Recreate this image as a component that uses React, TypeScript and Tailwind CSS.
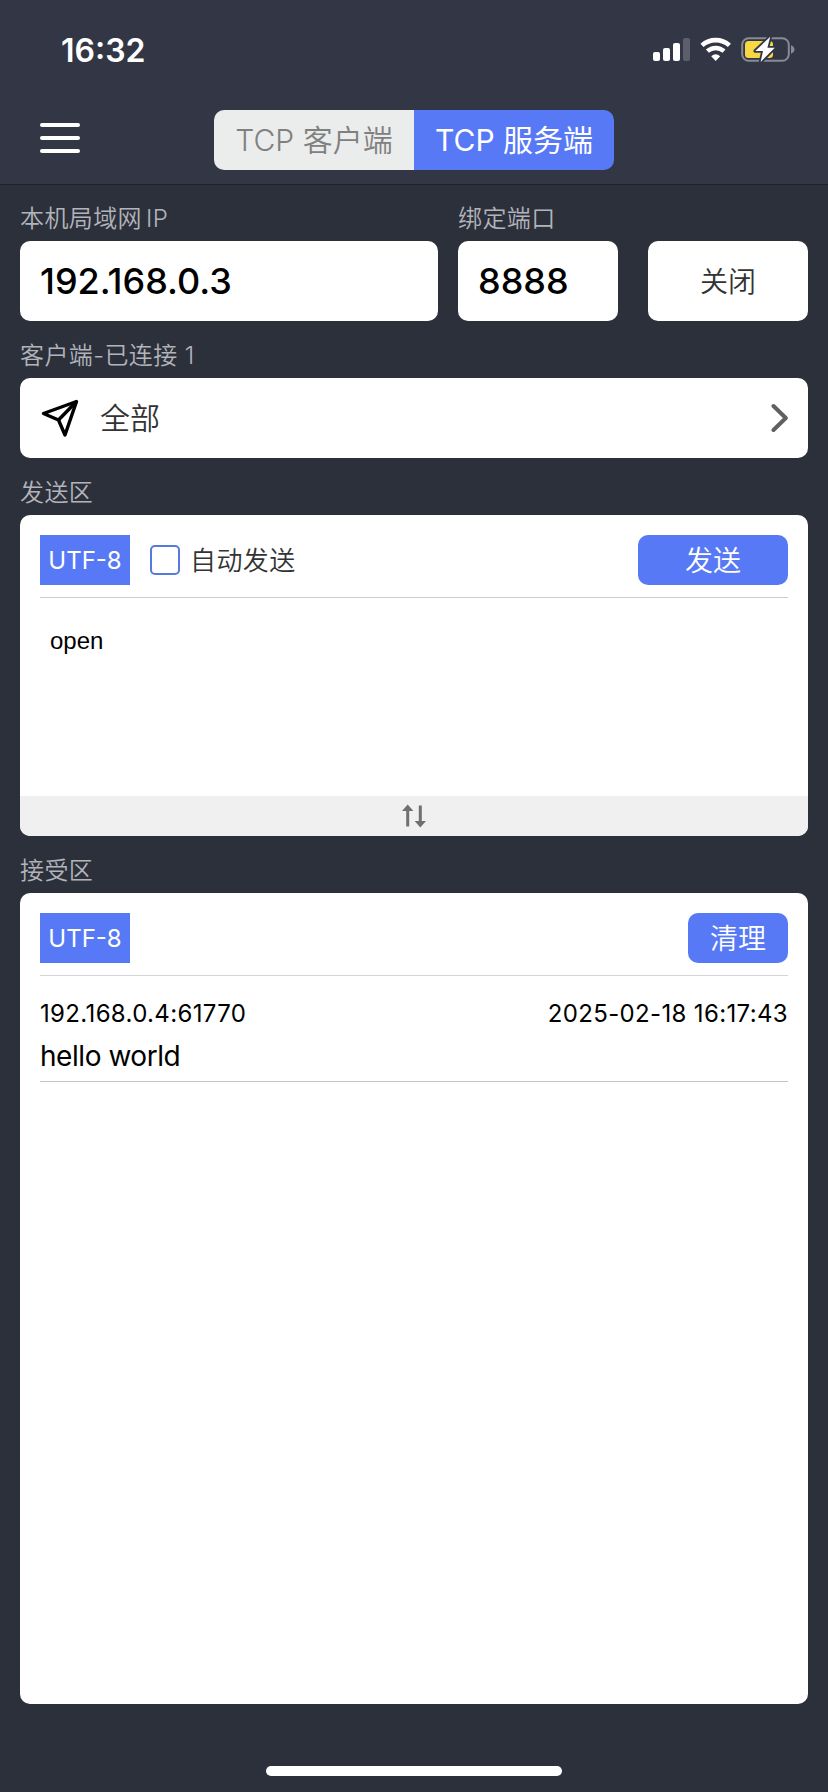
import type { ReactNode } from 'react';

function StatusIcons() {
  return (
    <svg width="142" height="28" viewBox="0 0 142 28" fill="none">
      <rect x="0" y="16" width="7" height="9" rx="2" fill="#fff" />
      <rect x="10" y="12" width="7" height="13" rx="2" fill="#fff" />
      <rect x="20" y="7" width="7" height="18" rx="2" fill="#fff" />
      <rect x="30" y="2" width="7" height="23" rx="2" fill="#5c5e6b" />
      <path d="M49 9.4 A20.5 20.5 0 0 1 76.400 9.4" stroke="#fff" strokeWidth="4.600" />
      <path d="M54.400 15.200 A12.300 12.300 0 0 1 71 15.200" stroke="#fff" strokeWidth="4.400" />
      <path d="M58.200 20.300 Q62.700 16.400 67.200 20.300 L62.700 25 Z" fill="#fff" />
      <rect x="89.200" y="2.200" width="46.600" height="22.600" rx="6.500" stroke="#888a94" strokeWidth="2" />
      <path d="M138 9.300 Q141.500 10.800 141.500 13.500 Q141.500 16.200 138 17.700 Z" fill="#888a94" />
      <rect x="92" y="5" width="28" height="17" rx="3.500" fill="#f8d745" />
      <path
        d="M117.200 0.800 L102.300 14.900 L110 14.900 L107.600 26 L121.800 11.800 L114.400 11.800 Z"
        fill="#fff"
        stroke="#333645"
        strokeWidth="3.600"
        strokeLinejoin="round"
        paintOrder="stroke"
      />
    </svg>
  );
}

function SectionLabel({ children }: { children: ReactNode }) {
  return (
    <div className="h-[57px] pt-[13px] text-2xl leading-[44px] font-[350] tracking-[0.4px] whitespace-nowrap text-[#b2b4ba]">
      {children}
    </div>
  );
}

function EncodingTag() {
  return (
    <button className="h-[50px] w-[90px] bg-[#5779f6] pt-0.5 text-2xl text-white">UTF-8</button>
  );
}

function Header() {
  return (
    <header className="h-[185px] border-b border-[#20222e] bg-[#333645]">
      <div className="flex h-[100px] items-start justify-between pr-[33px] pl-[61px]">
        <span className="pt-[27px] text-[32px] leading-[48px] font-semibold text-white">16:32</span>
        <div className="pt-[36px]">
          <StatusIcons />
        </div>
      </div>
      <div className="flex items-center pt-[10px] pl-10">
        <button aria-label="菜单" className="flex w-10 flex-col gap-[9px] pb-1">
          <span className="h-1 rounded-sm bg-white" />
          <span className="h-1 rounded-sm bg-white" />
          <span className="h-1 rounded-sm bg-white" />
        </button>
        <div className="ml-[134px] flex h-[60px] w-[400px] overflow-hidden rounded-[10px] text-[30px]">
          <button className="flex-1 bg-[#ebecec] font-[350] text-[#808080]">TCP 客户端</button>
          <button className="flex-1 bg-[#5779f6] text-white">TCP 服务端</button>
        </div>
      </div>
    </header>
  );
}

export default function App() {
  return (
    <div
      className="flex h-[1792px] w-[828px] flex-col bg-[#2c303b]"
      style={{ fontFamily: 'Inter, "Noto Sans CJK SC", sans-serif' }}
    >
      <Header />
      <main className="-mt-px flex flex-1 flex-col px-5">
        <div className="flex items-end">
          <div className="w-[418px]">
            <SectionLabel>
              本机局域网<span className="ml-1">IP</span>
            </SectionLabel>
            <div className="flex h-20 items-center rounded-[10px] bg-white px-5 text-[36px] font-medium text-black">
              192.168.0.3
            </div>
          </div>
          <div className="ml-5 w-40">
            <SectionLabel>绑定端口</SectionLabel>
            <div className="flex h-20 items-center rounded-[10px] bg-white px-5 text-[36px] font-medium text-black">
              8888
            </div>
          </div>
          <button className="ml-[30px] h-20 w-40 rounded-[10px] bg-white pt-0.5 text-[28px] font-[350] text-[#333]">
            关闭
          </button>
        </div>

        <SectionLabel>客户端-已连接 1</SectionLabel>
        <div className="flex h-20 items-center rounded-[10px] bg-white pr-5 pl-5">
          <svg width="40" height="40" viewBox="0 0 40 40" fill="none" stroke="#000" strokeWidth="3.400" strokeLinejoin="round">
            <path d="M36.500 3.500 L3.500 15.500 L18.500 22 L25 37 Z" />
            <path d="M36.500 3.500 L18.500 22" />
          </svg>
          <span className="ml-5 text-[30px] font-[350] text-[#333]">全部</span>
          <svg
            className="ml-auto"
            width="18"
            height="30"
            viewBox="0 0 18 30"
            fill="none"
            stroke="#606060"
            strokeWidth="4"
            strokeLinecap="round"
            strokeLinejoin="round"
          >
            <path d="M3.500 3 L15.800 15 L3.500 27" />
          </svg>
        </div>

        <SectionLabel>发送区</SectionLabel>
        <section className="flex h-[321px] flex-col overflow-hidden rounded-[10px] bg-white">
          <div className="mx-5 flex h-[83px] items-start border-b border-[#cbcccd] pt-5">
            <EncodingTag />
            <label className="ml-5 flex h-[50px] items-center text-[26px] font-[350] tracking-[0.4px] text-[#333]">
              <span className="mr-2.5 h-[30px] w-[30px] rounded-[5px] border-2 border-[#5779e0]" />
              自动发送
            </label>
            <button className="ml-auto h-[50px] w-[150px] rounded-[10px] bg-[#5779f6] pt-0.5 text-[28px] font-[350] text-white">
              发送
            </button>
          </div>
          <div
            className="flex-1 px-[30px] pt-[25px] text-2xl leading-9 text-black"
            style={{ fontFamily: '"Liberation Sans", sans-serif' }}
          >
            open
          </div>
          <div className="flex h-10 items-center justify-center bg-[#f0f0f0]">
            <svg width="26" height="24" viewBox="0 0 26 24" fill="#707070">
              <path d="M6.700 0.500 L12.400 7 H8.200 V22.500 H5.200 V7 H1 Z" />
              <path d="M19.300 23.500 L25 17 H20.800 V1.500 H17.800 V17 H13.600 Z" />
            </svg>
          </div>
        </section>

        <SectionLabel>接受区</SectionLabel>
        <section className="flex h-[811px] flex-col rounded-[10px] bg-white px-5">
          <div className="flex h-[83px] items-start justify-between border-b border-[#d4d4d4] pt-5">
            <EncodingTag />
            <button className="h-[50px] w-[100px] rounded-[10px] bg-[#5779f6] pt-0.5 text-[28px] font-[350] text-white">
              清理
            </button>
          </div>
          <div className="h-[106px] border-b border-[#c4c4c4] pt-5 text-black">
            <div className="flex justify-between text-2xl leading-9 tracking-[0.35px]">
              <span>192.168.0.4:61770</span>
              <span>2025-02-18 16:17:43</span>
            </div>
            <div className="pt-0.5 text-[28px] leading-[44px] tracking-[-0.45px]">hello world</div>
          </div>
        </section>
      </main>
      <div className="flex h-[26px] shrink-0 justify-center">
        <div className="h-2.5 w-[296px] rounded-full bg-white" />
      </div>
    </div>
  );
}
